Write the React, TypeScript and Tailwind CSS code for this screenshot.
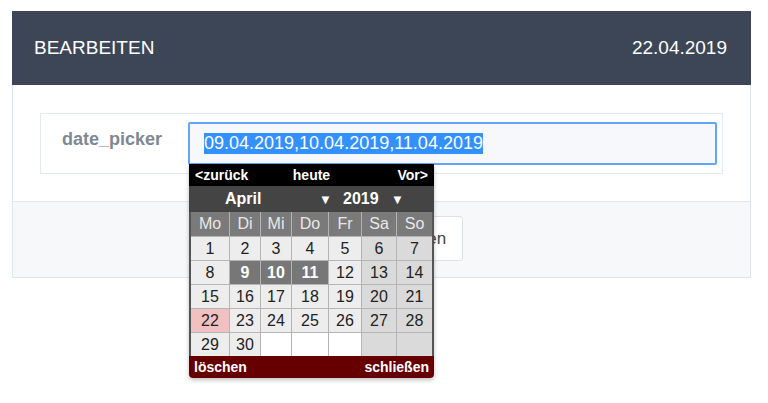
import React from "react";

type Day = { n?: number; kind: "week" | "weekend" | "sel" | "today" | "empty" | "emptyEnd" };

const WEEKDAYS = ["Mo", "Di", "Mi", "Do", "Fr", "Sa", "So"];
const SELECTED = [9, 10, 11];
const TODAY = 22;

function buildDays(): Day[] {
  const days: Day[] = [];
  for (let i = 0; i < 35; i++) {
    const n = i + 1;
    const col = i % 7;
    const weekend = col >= 5;
    if (n > 30) {
      days.push({ kind: weekend ? "emptyEnd" : "empty" });
    } else if (SELECTED.includes(n)) {
      days.push({ n, kind: "sel" });
    } else if (n === TODAY) {
      days.push({ n, kind: "today" });
    } else {
      days.push({ n, kind: weekend ? "weekend" : "week" });
    }
  }
  return days;
}

const cellClass: Record<Day["kind"], string> = {
  week: "bg-[#ededed] text-[#222]",
  weekend: "bg-[#dadada] text-[#222]",
  sel: "bg-[#777777] text-white font-bold",
  today: "bg-[#f1c1c1] text-[#222]",
  empty: "bg-white",
  emptyEnd: "bg-[#dadada]",
};

function DatePickerPopup() {
  const days = buildDays();
  return (
    <div className="absolute left-px top-[-1px] z-10 w-[245px] rounded-b-[4px] shadow-[0_2px_4px_rgba(0,0,0,0.25)] select-none">
      <div className="grid h-[22px] grid-cols-3 items-center bg-black px-[6px] text-[14px] font-bold leading-none text-white">
        <span>&lt;zurück</span>
        <span className="text-center">heute</span>
        <span className="text-right">Vor&gt;</span>
      </div>
      <div className="flex h-[26px] items-center bg-[#444] pl-[36px] text-[16px] font-bold leading-none text-white">
        <span className="w-[94px]">April</span>
        <span className="w-[24px] text-[13px]">▼</span>
        <span className="w-[48px]">2019</span>
        <span className="text-[13px]">▼</span>
      </div>
      <div className="bg-[#555] px-[2px]">
        <div className="grid grid-cols-[38px_30px_30px_36px_32px_34px_35px] gap-px bg-[#b4b4b4]">
          {WEEKDAYS.map((d) => (
            <div
              key={d}
              className="flex h-[24px] items-center justify-center bg-[#7a7a7a] text-[16px] text-[#e8e8e8]"
            >
              {d}
            </div>
          ))}
          {days.map((d, i) => (
            <div
              key={i}
              className={`flex h-[23px] items-center justify-center text-[16px] ${cellClass[d.kind]}`}
            >
              {d.n ?? ""}
            </div>
          ))}
        </div>
      </div>
      <div className="flex h-[22px] items-center justify-between rounded-b-[4px] bg-[#660000] px-[5px] text-[14px] font-bold leading-none text-white">
        <span>löschen</span>
        <span>schließen</span>
      </div>
    </div>
  );
}

export default function App() {
  return (
    <div className="min-h-[403px] bg-white pl-[12px] pt-[11px] font-['Liberation_Sans',Arial,sans-serif]">
      <div className="w-[739px] border-x border-b border-[#dfe4eb]">
        <div className="-mx-px flex h-[74px] items-center justify-between bg-[#3c4656] pl-[22px] pr-[24px] text-[19px] text-white">
          <span>BEARBEITEN</span>
          <span>22.04.2019</span>
        </div>
        <div className="bg-white px-[27px] pb-[27px] pt-[28px]">
          <div className="flex h-[61px] border border-[#e4e9f0] pl-[21px] pr-[5px] pt-[8px]">
            <div className="w-[126px] pt-[7px] text-[18px] font-bold leading-[20px] text-[#7d8795]">
              date_picker
            </div>
            <div className="relative h-[43px] flex-1">
              <div className="flex h-full items-center rounded-[2px] border-2 border-[#62a5fb] bg-[#f6f8fb] pl-[14px]">
                <span className="bg-[#3390ff] text-[18px] leading-[21px] text-white">
                  09.04.2019,10.04.2019,11.04.2019
                </span>
              </div>
              <div className="absolute left-0 top-full">
                <DatePickerPopup />
              </div>
            </div>
          </div>
        </div>
        <div className="flex h-[76px] items-start border-t border-[#e3e7ed] bg-[#f7f8fa] pl-[334px] pt-[14px]">
          <button className="h-[45px] rounded-[3px] border border-[#dde2e8] bg-white px-4 text-[17px] text-[#444]">
            Abbrechen
          </button>
        </div>
      </div>
    </div>
  );
}
